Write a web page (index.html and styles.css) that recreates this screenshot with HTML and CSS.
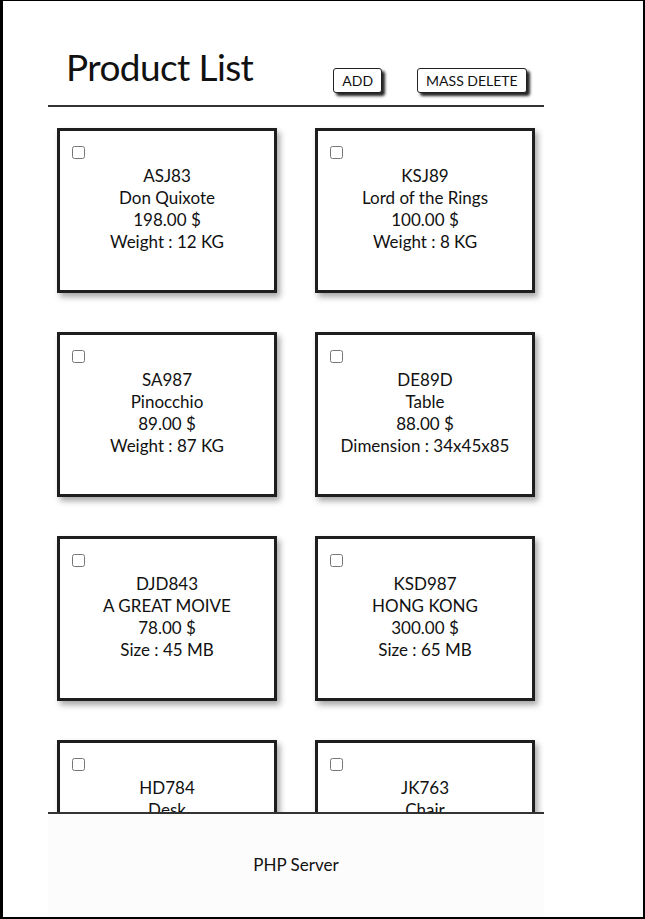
FILE: index.html
```html
<!DOCTYPE html>
<html lang="en">
<head>
<meta charset="utf-8">
<title>Product List</title>
<link rel="stylesheet" href="styles.css">
</head>
<body>
<div class="frame"></div>
<div class="page">
  <header class="header">
    <h1 class="title">Product List</h1>
    <div class="actions">
      <button class="btn">ADD</button>
      <button class="btn">MASS DELETE</button>
    </div>
  </header>
  <main class="grid">
    <div class="card"><input type="checkbox" class="check"><div class="info"><div>ASJ83</div><div>Don Quixote</div><div>198.00 $</div><div>Weight : 12 KG</div></div></div>
    <div class="card"><input type="checkbox" class="check"><div class="info"><div>KSJ89</div><div>Lord of the Rings</div><div>100.00 $</div><div>Weight : 8 KG</div></div></div>
    <div class="card"><input type="checkbox" class="check"><div class="info"><div>SA987</div><div>Pinocchio</div><div>89.00 $</div><div>Weight : 87 KG</div></div></div>
    <div class="card"><input type="checkbox" class="check"><div class="info"><div>DE89D</div><div>Table</div><div>88.00 $</div><div>Dimension : 34x45x85</div></div></div>
    <div class="card"><input type="checkbox" class="check"><div class="info"><div>DJD843</div><div>A GREAT MOIVE</div><div>78.00 $</div><div>Size : 45 MB</div></div></div>
    <div class="card"><input type="checkbox" class="check"><div class="info"><div>KSD987</div><div>HONG KONG</div><div>300.00 $</div><div>Size : 65 MB</div></div></div>
    <div class="card"><input type="checkbox" class="check"><div class="info"><div>HD784</div><div>Desk</div><div>120.00 $</div><div>Dimension : 80x120x75</div></div></div>
    <div class="card"><input type="checkbox" class="check"><div class="info"><div>JK763</div><div>Chair</div><div>45.00 $</div><div>Dimension : 45x45x90</div></div></div>
  </main>
</div>
<footer class="footer">PHP Server</footer>
</body>
</html>
```
FILE: styles.css
```css
html, body {
  margin: 0;
  padding: 0;
  background: #fff;
}
body {
  font-family: Lato, "Open Sans", sans-serif;
  color: #111;
}
.frame {
  position: fixed;
  inset: 0;
  border-style: solid;
  border-color: #000;
  border-width: 1px 2px 2px 3px;
  pointer-events: none;
  z-index: 10;
}
.page {
  width: 496px;
  margin-left: 48px;
  padding-bottom: 120px;
}
.header {
  display: flex;
  align-items: flex-start;
  padding: 44px 0 0 18px;
  height: 61px;
  border-bottom: 2px solid #333;
}
.title {
  margin: 0;
  font-size: 37px;
  font-weight: 400;
  line-height: 46px;
  letter-spacing: -0.6px;
}
.actions {
  display: flex;
  gap: 35px;
  margin: 24px 0 0 80px;
}
.btn {
  font-family: Lato, "Open Sans", sans-serif;
  font-size: 14px;
  height: 25px;
  padding: 0 8px;
  background: #fff;
  color: #111;
  border: 1px solid #222;
  border-radius: 3px;
  box-shadow: 3px 3px 3px #222;
}
.grid {
  display: grid;
  grid-template-columns: 220px 220px;
  column-gap: 38px;
  row-gap: 39px;
  padding: 21px 9px 0;
}
.card {
  height: 165px;
  box-sizing: border-box;
  border: 3px solid #1e1e1e;
  box-shadow: 3px 4px 6px rgba(0, 0, 0, 0.35);
  padding: 15px 12px;
  background: #fff;
}
.check {
  display: block;
  margin: 0;
  width: 13px;
  height: 13px;
}
.info {
  margin-top: 6px;
  text-align: center;
  font-size: 17px;
  line-height: 22px;
}
.footer {
  position: fixed;
  left: 48px;
  bottom: 2px;
  width: 496px;
  height: 105px;
  box-sizing: border-box;
  border-top: 2px solid #333;
  background: #fcfcfc;
  display: flex;
  align-items: center;
  justify-content: center;
  font-size: 17px;
  padding-bottom: 2px;
}
```
